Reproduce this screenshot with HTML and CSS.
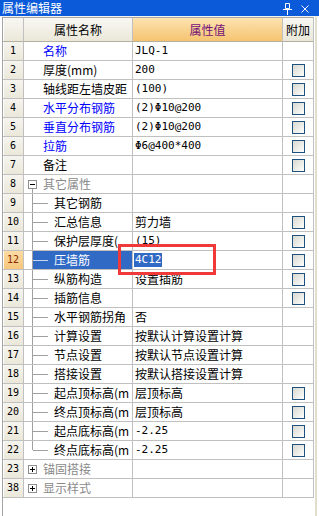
FILE: index.html
```html
<!DOCTYPE html>
<html lang="zh-CN">
<head>
<meta charset="utf-8">
<title>属性编辑器</title>
<link rel="stylesheet" href="styles.css">
</head>
<body>
<div class="win">
  <div class="title">
    <span class="ttext">属性编辑器</span>
    <span class="tbtns">
      <svg class="pin" width="9" height="12" viewBox="0 0 9 12"><path d="M2.5 0.5h4v5h-4z M0 6.5h9 M4.5 7v5" fill="none" stroke="#fff" stroke-width="1"/></svg>
      <svg class="close" width="8" height="8" viewBox="0 0 8 8"><path d="M0.5 0.5L7.5 7.5M7.5 0.5L0.5 7.5" stroke="#fff" stroke-width="1"/></svg>
    </span>
  </div>
  <div class="gap"></div>
  <div class="main">
    <div class="grid">
      <table class="props">
        <thead>
          <tr><th class="hn"></th><th class="hname">属性名称</th><th class="hval">属性值</th><th class="hadd">附加</th></tr>
        </thead>
        <tbody>
          <tr><td class="n"><div class="nb">1</div></td><td class="nm"><div class="c top blue">名称</div></td><td class="val"><div class="v m">JLQ-1</div></td><td class="add"></td></tr>
          <tr><td class="n"><div class="nb">2</div></td><td class="nm"><div class="c top">厚度(mm)</div></td><td class="val"><div class="v m">200</div></td><td class="add"><span class="cb"></span></td></tr>
          <tr><td class="n"><div class="nb">3</div></td><td class="nm"><div class="c top">轴线距左墙皮距</div></td><td class="val"><div class="v m">(100)</div></td><td class="add"><span class="cb"></span></td></tr>
          <tr><td class="n"><div class="nb">4</div></td><td class="nm"><div class="c top blue">水平分布钢筋</div></td><td class="val"><div class="v m">(2)Φ10@200</div></td><td class="add"><span class="cb"></span></td></tr>
          <tr><td class="n"><div class="nb">5</div></td><td class="nm"><div class="c top blue">垂直分布钢筋</div></td><td class="val"><div class="v m">(2)Φ10@200</div></td><td class="add"><span class="cb"></span></td></tr>
          <tr><td class="n"><div class="nb">6</div></td><td class="nm"><div class="c top blue">拉筋</div></td><td class="val"><div class="v m">Φ6@400*400</div></td><td class="add"><span class="cb"></span></td></tr>
          <tr><td class="n"><div class="nb">7</div></td><td class="nm"><div class="c top">备注</div></td><td class="val"><div class="v"></div></td><td class="add"><span class="cb"></span></td></tr>
          <tr><td class="n"><div class="nb">8</div></td><td class="nm"><div class="c grp"><span class="bw open"><span class="box minus"></span></span><span class="gt">其它属性</span></div></td><td class="val"><div class="v"></div></td><td class="add"></td></tr>
          <tr><td class="n"><div class="nb">9</div></td><td class="nm"><div class="c child"><span class="vl"></span><span class="hl"></span><span class="ct">其它钢筋</span></div></td><td class="val"><div class="v"></div></td><td class="add"></td></tr>
          <tr><td class="n"><div class="nb">10</div></td><td class="nm"><div class="c child"><span class="vl"></span><span class="hl"></span><span class="ct">汇总信息</span></div></td><td class="val"><div class="v">剪力墙</div></td><td class="add"><span class="cb"></span></td></tr>
          <tr><td class="n"><div class="nb">11</div></td><td class="nm"><div class="c child"><span class="vl"></span><span class="hl"></span><span class="ct">保护层厚度(</span></div></td><td class="val"><div class="v m">(15)</div></td><td class="add"><span class="cb"></span></td></tr>
          <tr><td class="n sn"><div class="nb">12</div></td><td class="nm"><div class="c child"><span class="vl"></span><span class="sel"><span class="hl"></span><span class="ct">压墙筋</span></span></div></td><td class="val"><div class="v m"><span class="hi">4C12</span></div></td><td class="add"><span class="cb"></span></td></tr>
          <tr><td class="n"><div class="nb">13</div></td><td class="nm"><div class="c child"><span class="vl"></span><span class="hl"></span><span class="ct">纵筋构造</span></div></td><td class="val"><div class="v">设置插筋</div></td><td class="add"><span class="cb"></span></td></tr>
          <tr><td class="n"><div class="nb">14</div></td><td class="nm"><div class="c child"><span class="vl"></span><span class="hl"></span><span class="ct">插筋信息</span></div></td><td class="val"><div class="v"></div></td><td class="add"><span class="cb"></span></td></tr>
          <tr><td class="n"><div class="nb">15</div></td><td class="nm"><div class="c child"><span class="vl"></span><span class="hl"></span><span class="ct">水平钢筋拐角</span></div></td><td class="val"><div class="v">否</div></td><td class="add"></td></tr>
          <tr><td class="n"><div class="nb">16</div></td><td class="nm"><div class="c child"><span class="vl"></span><span class="hl"></span><span class="ct">计算设置</span></div></td><td class="val"><div class="v">按默认计算设置计算</div></td><td class="add"></td></tr>
          <tr><td class="n"><div class="nb">17</div></td><td class="nm"><div class="c child"><span class="vl"></span><span class="hl"></span><span class="ct">节点设置</span></div></td><td class="val"><div class="v">按默认节点设置计算</div></td><td class="add"></td></tr>
          <tr><td class="n"><div class="nb">18</div></td><td class="nm"><div class="c child"><span class="vl"></span><span class="hl"></span><span class="ct">搭接设置</span></div></td><td class="val"><div class="v">按默认搭接设置计算</div></td><td class="add"></td></tr>
          <tr><td class="n"><div class="nb">19</div></td><td class="nm"><div class="c child"><span class="vl"></span><span class="hl"></span><span class="ct">起点顶标高(m</span></div></td><td class="val"><div class="v">层顶标高</div></td><td class="add"><span class="cb"></span></td></tr>
          <tr><td class="n"><div class="nb">20</div></td><td class="nm"><div class="c child"><span class="vl"></span><span class="hl"></span><span class="ct">终点顶标高(m</span></div></td><td class="val"><div class="v">层顶标高</div></td><td class="add"><span class="cb"></span></td></tr>
          <tr><td class="n"><div class="nb">21</div></td><td class="nm"><div class="c child"><span class="vl"></span><span class="hl"></span><span class="ct">起点底标高(m</span></div></td><td class="val"><div class="v m">-2.25</div></td><td class="add"><span class="cb"></span></td></tr>
          <tr><td class="n"><div class="nb">22</div></td><td class="nm"><div class="c child"><span class="vl last"></span><span class="hl"></span><span class="ct">终点底标高(m</span></div></td><td class="val"><div class="v m">-2.25</div></td><td class="add"><span class="cb"></span></td></tr>
          <tr><td class="n"><div class="nb">23</div></td><td class="nm"><div class="c grp"><span class="bw"><span class="box plus"></span></span><span class="gt">锚固搭接</span></div></td><td class="val"><div class="v"></div></td><td class="add"></td></tr>
          <tr><td class="n"><div class="nb">38</div></td><td class="nm"><div class="c grp"><span class="bw"><span class="box plus"></span></span><span class="gt">显示样式</span></div></td><td class="val"><div class="v"></div></td><td class="add"></td></tr>
        </tbody>
      </table>
    </div>
    <div class="split"></div>
  </div>
  <div class="redbox"></div>
</div>
</body>
</html>
```

FILE: styles.css
```css
html, body {
  margin: 0;
  padding: 0;
  background: #fff;
}
body {
  font-family: "Noto Sans CJK SC", "Noto Sans", sans-serif;
  font-size: 12px;
  color: #000;
}
.win {
  position: relative;
  width: 319px;
  height: 516px;
  overflow: hidden;
  background: #fff;
}
.title {
  height: 16px;
  background: #0b5ad9;
  color: #fff;
  display: flex;
  align-items: center;
  justify-content: space-between;
  padding-left: 2px;
}
.ttext {
  line-height: 16px;
  font-size: 12px;
}
.tbtns {
  display: flex;
  align-items: center;
  height: 16px;
  padding-right: 10px;
}
.pin {
  display: block;
  margin-top: 1px;
}
.close {
  display: block;
  margin-left: 9px;
  margin-top: 1px;
}
.gap {
  height: 1px;
  background: #f4f3ee;
}
.main {
  display: flex;
  height: 499px;
}
.grid {
  margin-left: 2px;
  width: 312px;
  border-left: 1px solid #a3a3a3;
  box-sizing: border-box;
  background: #fff;
}
.split {
  width: 2px;
  margin-left: 1px;
  background: #e2dece;
}
table.props {
  border-collapse: separate;
  border-spacing: 0;
  table-layout: fixed;
  width: 311px;
}
.props th, .props td {
  box-sizing: border-box;
  padding: 0;
  border-right: 1px solid #c0c0c0;
  border-bottom: 1px solid #c0c0c0;
  overflow: hidden;
  white-space: nowrap;
  vertical-align: top;
}
.props th {
  height: 25px;
  border-top: 1px solid #a8a8a8;
  border-bottom-color: #b3b0a2;
  font-weight: normal;
  text-align: center;
  background: linear-gradient(#f8f7f2, #ebe8da);
  line-height: 23px;
}
.props th.hn { width: 21px; box-shadow: inset 1px 0 #fff; }
.props th.hname { width: 109px; }
.props th.hval {
  width: 150px;
  color: #74107a;
  background: linear-gradient(#fce3b0, #f5c471);
}
.props th.hadd { width: 31px; }
.props td {
  height: 19px;
  line-height: 0;
}
.nb {
  height: 18px;
  display: flex;
  align-items: center;
  justify-content: center;
  font-family: "DejaVu Sans Mono", monospace;
  font-size: 10px;
  line-height: 18px;
}
td.n {
  background: linear-gradient(#f5f4ee, #ebe8da);
  box-shadow: inset 1px 0 #fff;
}
td.sn {
  background: linear-gradient(#fcdca4, #f6c67c);
  color: #8a2a00;
}
.c {
  display: flex;
  align-items: center;
  height: 18px;
  overflow: hidden;
  line-height: 18px;
}
.c.top { padding-left: 19px; }
.blue { color: #0000ff; }
.c.grp { padding-left: 4px; }
.bw {
  width: 9px;
  height: 18px;
  display: flex;
  align-items: center;
  flex: none;
}
.bw.open {
  background: linear-gradient(#a0a0a0, #a0a0a0) no-repeat 4px 13px / 1px 5px;
}
.box {
  width: 9px;
  height: 9px;
  box-sizing: border-box;
  border: 1px solid #8e8e8e;
  background-color: #fff;
  background-repeat: no-repeat;
}
.box.minus {
  background-image: linear-gradient(#000, #000);
  background-position: 1px 3px;
  background-size: 5px 1px;
}
.box.plus {
  background-image: linear-gradient(#000, #000), linear-gradient(#000, #000);
  background-position: 1px 3px, 3px 1px;
  background-size: 5px 1px, 1px 5px;
}
.gt {
  margin-left: 6px;
  color: #8a8a8a;
}
.c.child { padding-left: 8px; }
.vl {
  width: 1px;
  height: 18px;
  background: #a0a0a0;
  flex: none;
}
.vl.last {
  height: 9px;
  align-self: flex-start;
}
.hl {
  width: 15px;
  height: 1px;
  background: #a0a0a0;
  flex: none;
}
.ct { margin-left: 6px; }
.sel {
  display: flex;
  align-items: center;
  flex: 1;
  height: 18px;
  background: #316ac5;
  color: #fff;
}
.sel .hl { background: #c9d6f0; }
.v {
  height: 18px;
  display: flex;
  align-items: center;
  padding-left: 2px;
  line-height: 18px;
  overflow: hidden;
}
.v.m {
  font-family: "DejaVu Sans Mono", monospace;
  font-size: 11px;
}
.hi {
  display: block;
  background: #316ac5;
  color: #fff;
  line-height: 14px;
  height: 14px;
  margin-left: -1px;
  padding-left: 1px;
}
.cb {
  display: block;
  width: 13px;
  height: 13px;
  box-sizing: border-box;
  margin: 3px 0 2px 9px;
  border: 1px solid #1c5180;
  background: linear-gradient(135deg, #d9d9d2 0%, #f2f2ee 70%, #ffffff 100%);
}
.redbox {
  position: absolute;
  left: 118px;
  top: 244px;
  width: 98px;
  height: 31px;
  box-sizing: border-box;
  border: 3px solid #f03a3a;
}
```
